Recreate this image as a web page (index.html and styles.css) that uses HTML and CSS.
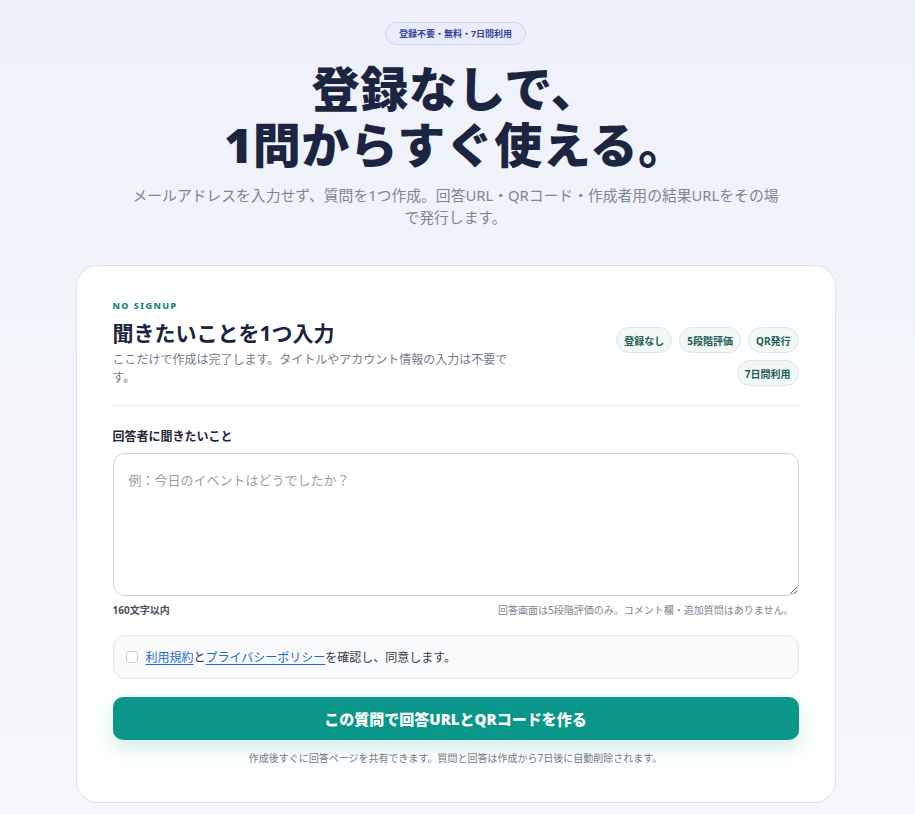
FILE: index.html
```html
<!DOCTYPE html>
<html lang="ja">
<head>
<meta charset="utf-8">
<title>登録なしで、1問からすぐ使える。</title>
<link rel="stylesheet" href="styles.css">
</head>
<body>
<main class="page">
  <section class="hero">
    <span class="hero-pill">登録不要・無料・7日間利用</span>
    <h1 class="hero-title">登録なしで、<br>1問からすぐ使える。</h1>
    <p class="hero-sub">メールアドレスを入力せず、質問を1つ作成。回答URL・QRコード・作成者用の結果URLをその場で発行します。</p>
  </section>

  <section class="card">
    <div class="card-head">
      <div class="head-text">
        <div class="eyebrow">NO SIGNUP</div>
        <h2 class="card-title">聞きたいことを1つ入力</h2>
        <p class="card-desc">ここだけで作成は完了します。タイトルやアカウント情報の入力は不要です。</p>
      </div>
      <div class="chips">
        <span class="chip">登録なし</span>
        <span class="chip">5段階評価</span>
        <span class="chip">QR発行</span>
        <span class="chip">7日間利用</span>
      </div>
    </div>

    <div class="field">
      <label class="field-label" for="q">回答者に聞きたいこと</label>
      <textarea id="q" class="field-input" placeholder="例：今日のイベントはどうでしたか？"></textarea>
      <div class="field-meta">
        <span class="meta-limit">160文字以内</span>
        <span class="meta-note">回答画面は5段階評価のみ。コメント欄・追加質問はありません。</span>
      </div>
    </div>

    <label class="agree">
      <input type="checkbox" class="agree-box">
      <span class="agree-text"><a href="#" class="link">利用規約</a>と<a href="#" class="link">プライバシーポリシー</a>を確認し、同意します。</span>
    </label>

    <button class="submit" type="button">この質問で回答URLとQRコードを作る</button>
    <p class="foot-note">作成後すぐに回答ページを共有できます。質問と回答は作成から7日後に自動削除されます。</p>
  </section>
</main>
</body>
</html>
```

FILE: styles.css
```css
* { box-sizing: border-box; }

html, body {
  margin: 0;
  padding: 0;
}

body {
  min-height: 814px;
  background: linear-gradient(180deg, #eef1fa 0%, #f3f5fb 50%, #f5f7fa 100%);
  font-family: "Noto Sans", "Noto Sans CJK JP", sans-serif;
  color: #1c2540;
}

.page {
  display: flex;
  flex-direction: column;
  align-items: center;
  padding-top: 22px;
  padding-right: 4px;
}

.hero {
  display: flex;
  flex-direction: column;
  align-items: center;
  text-align: center;
}

.hero-pill {
  display: inline-flex;
  align-items: center;
  height: 23px;
  padding: 0 13px;
  border: 1px solid #c9d1ef;
  border-radius: 12px;
  background: #e9edfb;
  color: #3342a0;
  font-size: 9px;
  font-weight: 700;
}

.hero-title {
  margin: 16px 0 0;
  font-size: 48px;
  line-height: 56px;
  font-weight: 900;
  color: #1b2440;
  letter-spacing: 0.01em;
}

.hero-sub {
  margin: 11px 0 0;
  max-width: 660px;
  font-size: 14.8px;
  line-height: 22px;
  font-weight: 400;
  color: #7d8595;
}

.card {
  width: 760px;
  margin-top: 37px;
  padding: 33px 36px 37px;
  background: #fff;
  border: 1px solid #dfe2ea;
  border-radius: 22px;
  display: flex;
  flex-direction: column;
}

.card-head {
  display: flex;
  justify-content: space-between;
  align-items: flex-end;
  padding-bottom: 18px;
  border-bottom: 1px solid #e5e8ee;
}

.head-text {
  max-width: 402px;
}

.eyebrow {
  font-size: 9px;
  line-height: 14px;
  font-weight: 800;
  letter-spacing: 0.16em;
  color: #0f877c;
}

.card-title {
  margin: 6px 0 0;
  font-size: 21px;
  line-height: 28px;
  font-weight: 700;
  color: #1b2440;
}

.card-desc {
  margin: 4px 0 0;
  font-size: 12px;
  line-height: 18px;
  color: #757c89;
}

.chips {
  display: flex;
  flex-wrap: wrap;
  justify-content: flex-end;
  gap: 7px;
  width: 200px;
  margin-bottom: 1px;
}

.chip {
  display: inline-flex;
  align-items: center;
  height: 26px;
  padding: 0 7px;
  border: 1px solid #d9e9e4;
  border-radius: 13px;
  background: #f1f8f6;
  color: #1f5d55;
  font-size: 10px;
  font-weight: 700;
}

.field {
  display: flex;
  flex-direction: column;
  margin-top: 22px;
}

.field-label {
  font-size: 12px;
  line-height: 18px;
  font-weight: 700;
  color: #1f2638;
}

.field-input {
  margin-top: 7px;
  height: 143px;
  padding: 16px 15px;
  border: 1px solid #cfd4dc;
  border-radius: 12px;
  font-family: inherit;
  font-size: 13px;
  line-height: 20px;
  color: #1f2638;
  resize: vertical;
  outline: none;
}

.field-input::placeholder {
  color: #9a9fa8;
}

.field-meta {
  display: flex;
  justify-content: space-between;
  align-items: center;
  margin-top: 7px;
  padding-right: 5px;
  font-size: 10px;
  line-height: 14px;
}

.meta-limit {
  font-weight: 700;
  color: #4a5160;
}

.meta-note {
  color: #7f8592;
}

.agree {
  display: flex;
  align-items: center;
  gap: 8px;
  height: 44px;
  margin-top: 18px;
  padding: 0 12px;
  background: #f8fafc;
  border: 1px solid #e2e6ec;
  border-radius: 12px;
  font-size: 12px;
  color: #333a47;
}

.agree-box {
  appearance: none;
  -webkit-appearance: none;
  width: 12px;
  height: 12px;
  margin: 0;
  border: 1px solid #c8ccd4;
  border-radius: 3px;
  background: #fff;
}

.link {
  color: #1a6bd4;
  text-decoration: underline;
  text-underline-offset: 2px;
}

.submit {
  margin-top: 18px;
  height: 43px;
  border: 0;
  border-radius: 10px;
  background: #0b968a;
  color: #fff;
  font-family: inherit;
  font-size: 15px;
  font-weight: 900;
  box-shadow: 0 8px 20px rgba(11, 150, 138, 0.18);
}

.foot-note {
  margin: 11px 0 0;
  text-align: center;
  font-size: 10px;
  line-height: 14px;
  color: #737a86;
}
```
